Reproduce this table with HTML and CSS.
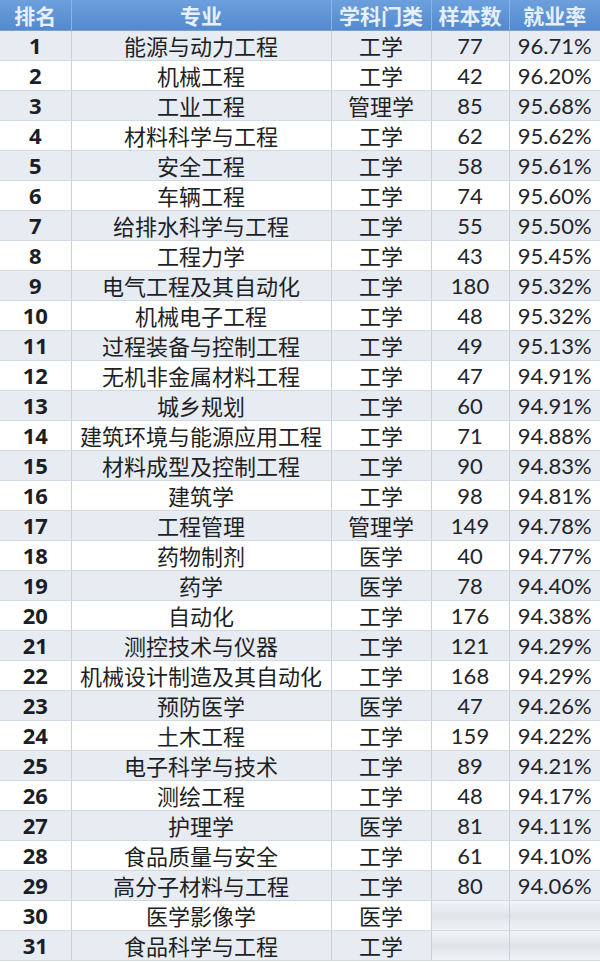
FILE: index.html
```html
<!DOCTYPE html>
<html lang="zh">
<head>
<meta charset="utf-8">
<title>专业就业率排名</title>
<link rel="stylesheet" href="styles.css">
</head>
<body>
<table class="rank-table">
  <colgroup>
    <col class="c-rank"><col class="c-major"><col class="c-cat"><col class="c-n"><col class="c-rate">
  </colgroup>
  <thead>
    <tr><th>排名</th><th>专业</th><th>学科门类</th><th>样本数</th><th>就业率</th></tr>
  </thead>
  <tbody>
    <tr><td class="rank">1</td><td>能源与动力工程</td><td>工学</td><td class="num">77</td><td class="num">96.71%</td></tr>
    <tr><td class="rank">2</td><td>机械工程</td><td>工学</td><td class="num">42</td><td class="num">96.20%</td></tr>
    <tr><td class="rank">3</td><td>工业工程</td><td>管理学</td><td class="num">85</td><td class="num">95.68%</td></tr>
    <tr><td class="rank">4</td><td>材料科学与工程</td><td>工学</td><td class="num">62</td><td class="num">95.62%</td></tr>
    <tr><td class="rank">5</td><td>安全工程</td><td>工学</td><td class="num">58</td><td class="num">95.61%</td></tr>
    <tr><td class="rank">6</td><td>车辆工程</td><td>工学</td><td class="num">74</td><td class="num">95.60%</td></tr>
    <tr><td class="rank">7</td><td>给排水科学与工程</td><td>工学</td><td class="num">55</td><td class="num">95.50%</td></tr>
    <tr><td class="rank">8</td><td>工程力学</td><td>工学</td><td class="num">43</td><td class="num">95.45%</td></tr>
    <tr><td class="rank">9</td><td>电气工程及其自动化</td><td>工学</td><td class="num">180</td><td class="num">95.32%</td></tr>
    <tr><td class="rank">10</td><td>机械电子工程</td><td>工学</td><td class="num">48</td><td class="num">95.32%</td></tr>
    <tr><td class="rank">11</td><td>过程装备与控制工程</td><td>工学</td><td class="num">49</td><td class="num">95.13%</td></tr>
    <tr><td class="rank">12</td><td>无机非金属材料工程</td><td>工学</td><td class="num">47</td><td class="num">94.91%</td></tr>
    <tr><td class="rank">13</td><td>城乡规划</td><td>工学</td><td class="num">60</td><td class="num">94.91%</td></tr>
    <tr><td class="rank">14</td><td>建筑环境与能源应用工程</td><td>工学</td><td class="num">71</td><td class="num">94.88%</td></tr>
    <tr><td class="rank">15</td><td>材料成型及控制工程</td><td>工学</td><td class="num">90</td><td class="num">94.83%</td></tr>
    <tr><td class="rank">16</td><td>建筑学</td><td>工学</td><td class="num">98</td><td class="num">94.81%</td></tr>
    <tr><td class="rank">17</td><td>工程管理</td><td>管理学</td><td class="num">149</td><td class="num">94.78%</td></tr>
    <tr><td class="rank">18</td><td>药物制剂</td><td>医学</td><td class="num">40</td><td class="num">94.77%</td></tr>
    <tr><td class="rank">19</td><td>药学</td><td>医学</td><td class="num">78</td><td class="num">94.40%</td></tr>
    <tr><td class="rank">20</td><td>自动化</td><td>工学</td><td class="num">176</td><td class="num">94.38%</td></tr>
    <tr><td class="rank">21</td><td>测控技术与仪器</td><td>工学</td><td class="num">121</td><td class="num">94.29%</td></tr>
    <tr><td class="rank">22</td><td>机械设计制造及其自动化</td><td>工学</td><td class="num">168</td><td class="num">94.29%</td></tr>
    <tr><td class="rank">23</td><td>预防医学</td><td>医学</td><td class="num">47</td><td class="num">94.26%</td></tr>
    <tr><td class="rank">24</td><td>土木工程</td><td>工学</td><td class="num">159</td><td class="num">94.22%</td></tr>
    <tr><td class="rank">25</td><td>电子科学与技术</td><td>工学</td><td class="num">89</td><td class="num">94.21%</td></tr>
    <tr><td class="rank">26</td><td>测绘工程</td><td>工学</td><td class="num">48</td><td class="num">94.17%</td></tr>
    <tr><td class="rank">27</td><td>护理学</td><td>医学</td><td class="num">81</td><td class="num">94.11%</td></tr>
    <tr><td class="rank">28</td><td>食品质量与安全</td><td>工学</td><td class="num">61</td><td class="num">94.10%</td></tr>
    <tr><td class="rank">29</td><td>高分子材料与工程</td><td>工学</td><td class="num">80</td><td class="num">94.06%</td></tr>
    <tr><td class="rank">30</td><td>医学影像学</td><td>医学</td><td class="num smear"></td><td class="num smear"></td></tr>
    <tr><td class="rank">31</td><td>食品科学与工程</td><td>工学</td><td class="num smear"></td><td class="num smear"></td></tr>
  </tbody>
</table>
</body>
</html>
```

FILE: styles.css
```css
html, body {
  margin: 0;
  padding: 0;
  background: #ffffff;
}

.rank-table {
  width: 600px;
  border-collapse: collapse;
  table-layout: fixed;
  font-family: "Noto Sans CJK SC", "Noto Sans", sans-serif;
  color: #1e1f24;
}

.c-rank { width: 71px; }
.c-major { width: 260px; }
.c-cat { width: 100px; }
.c-n { width: 78px; }
.c-rate { width: 91px; }

.rank-table th {
  height: 30px;
  padding: 0;
  background: linear-gradient(#6c9fdc, #5389cf);
  color: #e6effa;
  font-size: 21px;
  font-weight: 700;
  line-height: 30px;
  text-align: center;
  border-right: 1px solid #8ab2e2;
  border-bottom: 1px solid #7d9fc8;
  white-space: nowrap;
  overflow: hidden;
}

.rank-table th:last-child { border-right: none; }

.rank-table td {
  height: 29px;
  padding: 0;
  font-size: 22px;
  line-height: 29px;
  text-align: center;
  border-right: 1px solid #c9d0da;
  border-bottom: 1px solid #d3d9e1;
  white-space: nowrap;
  overflow: hidden;
}

.rank-table td:last-child { border-right: none; }

.rank-table tbody tr:nth-child(odd) td {
  background: #e7ebf2;
}

.rank-table td.rank {
  font-family: "Open Sans", "Liberation Sans", sans-serif;
  font-weight: 700;
  font-size: 22px;
  color: #1c1e26;
}

.rank-table td.num {
  font-family: Lato, "Liberation Sans", sans-serif;
  font-size: 22px;
  color: #23252b;
}

.rank-table tbody tr td.smear {
  background: linear-gradient(180deg, #f1f3f6 0%, #dfe3e9 50%, #f1f3f6 100%);
}
```
